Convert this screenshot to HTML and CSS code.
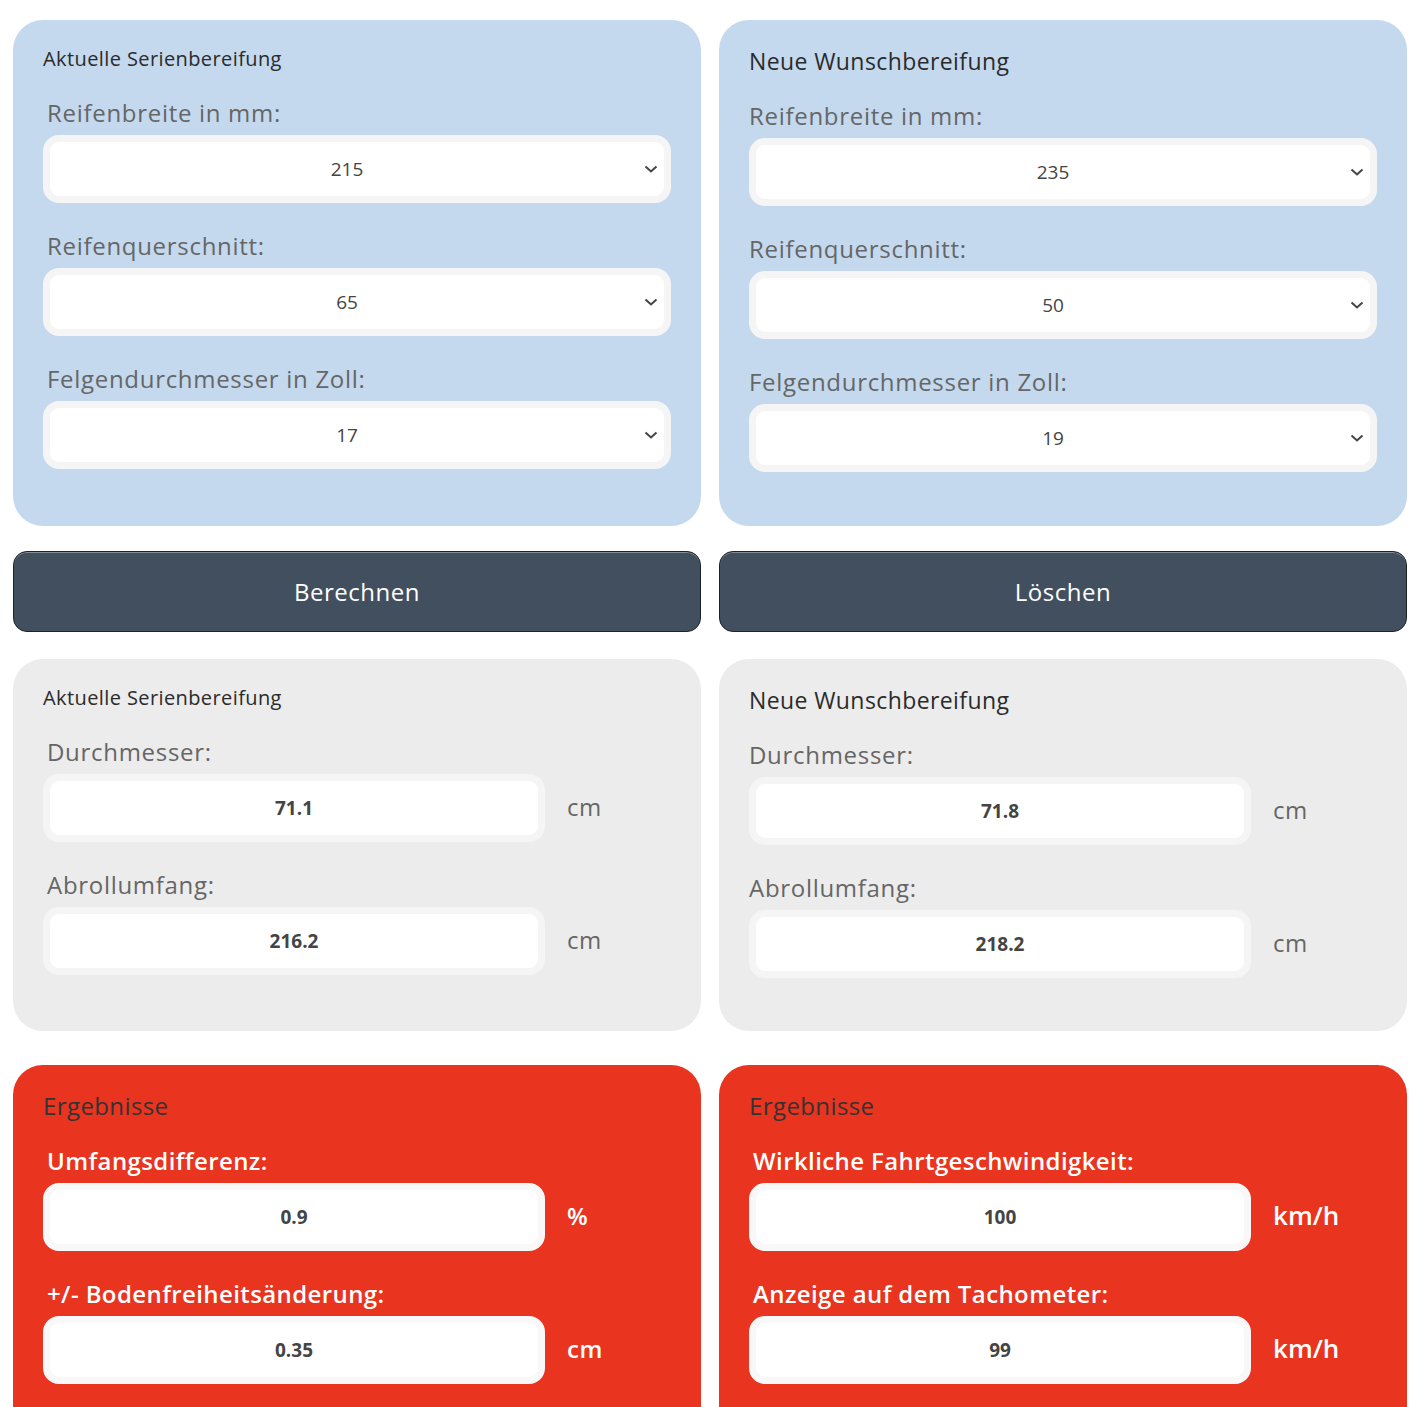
FILE: index.html
```html
<!DOCTYPE html>
<html lang="de">
<head>
    <meta charset="UTF-8">
    <meta name="viewport" content="width=device-width, initial-scale=1.0">
    <title>Reifenrechner</title>
    <link rel="stylesheet" href="styles.css">
</head>
<body>
    <div class="calculator">
        <!-- Eingabe -->
        <div class="card card-input">
            <div class="card-title small">Aktuelle Serienbereifung</div>
            <div class="field indent">
                <label>Reifenbreite in mm:</label>
                <div class="select-wrap">
                    <select class="tire-select"><option>215</option></select>
                    <svg class="chevron" width="14" height="8" viewBox="0 0 14 8"><path d="M1.5 1.5 L7 6.5 L12.5 1.5" fill="none" stroke="#444" stroke-width="2"/></svg>
                </div>
            </div>
            <div class="field indent">
                <label>Reifenquerschnitt:</label>
                <div class="select-wrap">
                    <select class="tire-select"><option>65</option></select>
                    <svg class="chevron" width="14" height="8" viewBox="0 0 14 8"><path d="M1.5 1.5 L7 6.5 L12.5 1.5" fill="none" stroke="#444" stroke-width="2"/></svg>
                </div>
            </div>
            <div class="field indent">
                <label>Felgendurchmesser in Zoll:</label>
                <div class="select-wrap">
                    <select class="tire-select"><option>17</option></select>
                    <svg class="chevron" width="14" height="8" viewBox="0 0 14 8"><path d="M1.5 1.5 L7 6.5 L12.5 1.5" fill="none" stroke="#444" stroke-width="2"/></svg>
                </div>
            </div>
        </div>
        <div class="card card-input">
            <div class="card-title">Neue Wunschbereifung</div>
            <div class="field">
                <label>Reifenbreite in mm:</label>
                <div class="select-wrap">
                    <select class="tire-select"><option>235</option></select>
                    <svg class="chevron" width="14" height="8" viewBox="0 0 14 8"><path d="M1.5 1.5 L7 6.5 L12.5 1.5" fill="none" stroke="#444" stroke-width="2"/></svg>
                </div>
            </div>
            <div class="field">
                <label>Reifenquerschnitt:</label>
                <div class="select-wrap">
                    <select class="tire-select"><option>50</option></select>
                    <svg class="chevron" width="14" height="8" viewBox="0 0 14 8"><path d="M1.5 1.5 L7 6.5 L12.5 1.5" fill="none" stroke="#444" stroke-width="2"/></svg>
                </div>
            </div>
            <div class="field">
                <label>Felgendurchmesser in Zoll:</label>
                <div class="select-wrap">
                    <select class="tire-select"><option>19</option></select>
                    <svg class="chevron" width="14" height="8" viewBox="0 0 14 8"><path d="M1.5 1.5 L7 6.5 L12.5 1.5" fill="none" stroke="#444" stroke-width="2"/></svg>
                </div>
            </div>
        </div>

        <!-- Buttons -->
        <button class="action-btn">Berechnen</button>
        <button class="action-btn">Löschen</button>

        <!-- Reifendaten -->
        <div class="card card-data">
            <div class="card-title small">Aktuelle Serienbereifung</div>
            <div class="field indent">
                <label>Durchmesser:</label>
                <div class="output-row">
                    <input class="output" type="text" value="71.1" readonly>
                    <span class="unit">cm</span>
                </div>
            </div>
            <div class="field indent">
                <label>Abrollumfang:</label>
                <div class="output-row">
                    <input class="output" type="text" value="216.2" readonly>
                    <span class="unit">cm</span>
                </div>
            </div>
        </div>
        <div class="card card-data">
            <div class="card-title">Neue Wunschbereifung</div>
            <div class="field">
                <label>Durchmesser:</label>
                <div class="output-row">
                    <input class="output" type="text" value="71.8" readonly>
                    <span class="unit">cm</span>
                </div>
            </div>
            <div class="field">
                <label>Abrollumfang:</label>
                <div class="output-row">
                    <input class="output" type="text" value="218.2" readonly>
                    <span class="unit">cm</span>
                </div>
            </div>
        </div>

        <!-- Ergebnisse -->
        <div class="card card-result">
            <div class="card-title result-title">Ergebnisse</div>
            <div class="field indent">
                <label>Umfangsdifferenz:</label>
                <div class="output-row">
                    <input class="output" type="text" value="0.9" readonly>
                    <span class="unit">%</span>
                </div>
            </div>
            <div class="field indent">
                <label>+/- Bodenfreiheitsänderung:</label>
                <div class="output-row">
                    <input class="output" type="text" value="0.35" readonly>
                    <span class="unit">cm</span>
                </div>
            </div>
        </div>
        <div class="card card-result">
            <div class="card-title result-title">Ergebnisse</div>
            <div class="field indent">
                <label>Wirkliche Fahrtgeschwindigkeit:</label>
                <div class="output-row">
                    <input class="output" type="text" value="100" readonly>
                    <span class="unit big">km/h</span>
                </div>
            </div>
            <div class="field indent">
                <label>Anzeige auf dem Tachometer:</label>
                <div class="output-row">
                    <input class="output" type="text" value="99" readonly>
                    <span class="unit big">km/h</span>
                </div>
            </div>
        </div>
    </div>
</body>
</html>
```

FILE: styles.css
```css
/* General */
body {
    margin: 0;
    padding: 0;
    font-family: "Open Sans", "Noto Sans", Arial, sans-serif;
    background-color: #fff;
    color: #333;
}

.calculator {
    display: grid;
    grid-template-columns: 688px 688px;
    column-gap: 18px;
    padding: 20px 0 0 13px;
}

/* Cards */
.card {
    border-radius: 30px;
    padding: 26px 30px 55px;
}

.card-input {
    background-color: #c4d9ee;
    padding-bottom: 54px;
    margin-bottom: 25px;
}

.card-data {
    background-color: #ececec;
    padding-bottom: 53px;
    margin-bottom: 34px;
}

.card-result {
    background-color: #e9341f;
    padding-top: 26px;
}

.card-title {
    font-size: 23px;
    line-height: 30px;
    letter-spacing: 0.4px;
    color: #2b2b2b;
    margin-bottom: -3px;
}

.card-title.small {
    font-size: 20px;
    line-height: 26px;
    margin-bottom: -2px;
}

.result-title {
    font-size: 24px;
    color: #333;
    margin-bottom: -3px;
}

/* Fields */
.field {
    margin-top: 28px;
}

.field label {
    display: block;
    font-size: 24px;
    line-height: 30px;
    letter-spacing: 0.7px;
    color: #666;
    margin-bottom: 7px;
}

.field.indent label {
    padding-left: 4px;
}

.card-result .field label {
    color: #fff;
    font-weight: 600;
    letter-spacing: 0.4px;
}

/* Select with own arrow */
.select-wrap {
    position: relative;
}

.tire-select {
    display: block;
    width: 100%;
    height: 68px;
    border: 7px solid #f5f5f5;
    border-radius: 16px;
    background-color: #fff;
    font-family: inherit;
    font-size: 19px;
    color: #444;
    text-align: center;
    text-align-last: center;
    padding: 0 40px 0 20px;
    outline: none;
    appearance: none;
    -webkit-appearance: none;
}

.chevron {
    position: absolute;
    right: 13px;
    top: 30px;
    pointer-events: none;
}

.output-row {
    display: flex;
    align-items: center;
    gap: 22px;
}

.output {
    box-sizing: border-box;
    width: 502px;
    height: 68px;
    border: 7px solid #f5f5f5;
    border-radius: 16px;
    background-color: #fff;
    font-family: inherit;
    font-size: 19px;
    font-weight: 700;
    color: #444;
    text-align: center;
    outline: none;
}

.card-result .output {
    border-color: #f8f8f8;
}

.unit {
    font-size: 24px;
    letter-spacing: 0.6px;
    color: #666;
    margin-top: -4px;
}

.card-result .unit {
    color: #fff;
    font-weight: 600;
}

.unit.big {
    font-size: 26px;
    letter-spacing: 0;
}

/* Buttons */
.action-btn {
    height: 81px;
    margin-bottom: 27px;
    background-color: #424f5e;
    border: 1px solid #1d2229;
    border-radius: 14px;
    box-shadow: inset 0 1px 0 rgba(255, 255, 255, 0.35);
    color: #fff;
    font-family: inherit;
    font-size: 24px;
    letter-spacing: 0.5px;
    cursor: pointer;
}

.action-btn:hover {
    background-color: #4b596a;
}
```
